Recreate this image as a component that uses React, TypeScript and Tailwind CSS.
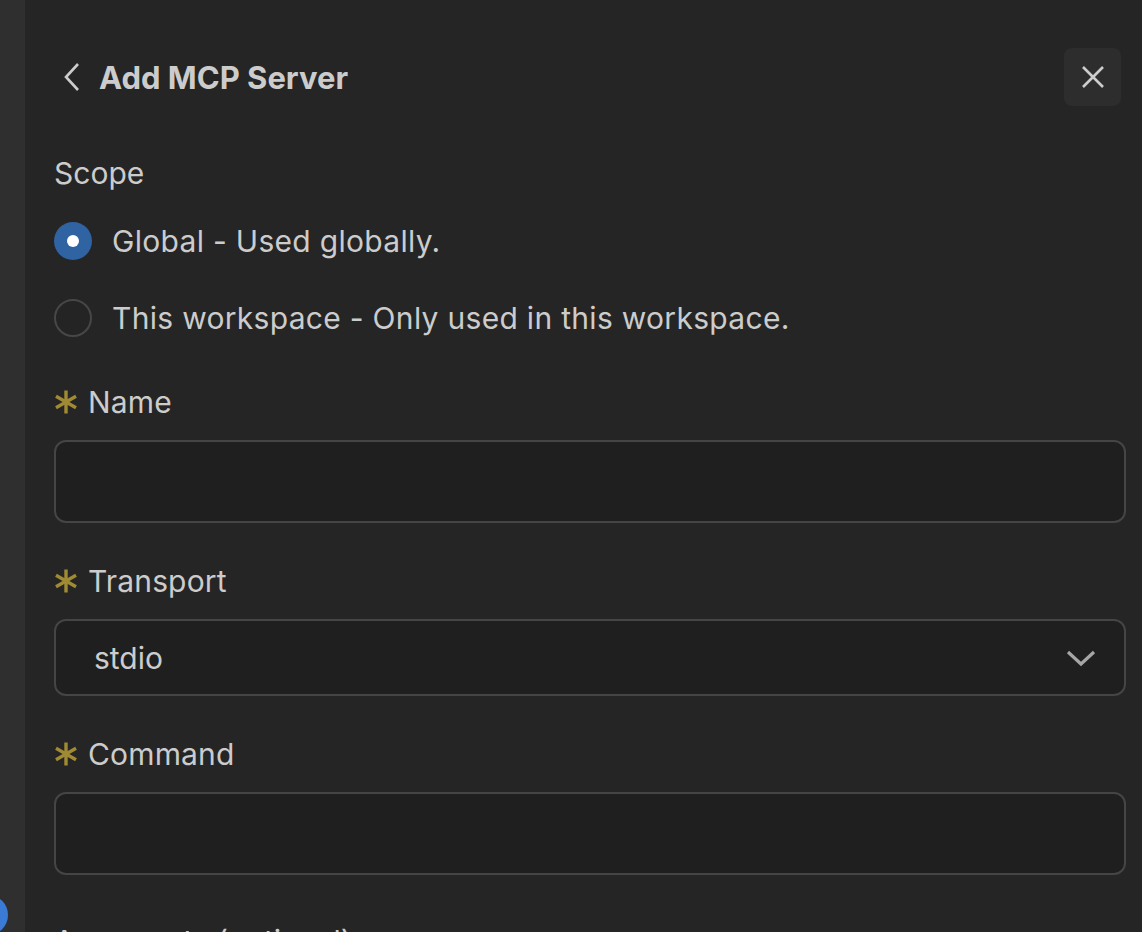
import React from 'react';

// Gold "required" asterisk (codicon style, six spokes)
function Required() {
  return (
    <svg width="24" height="24" viewBox="0 0 24 24" className="shrink-0">
      <g stroke="#a08a34" strokeWidth="3.4" strokeLinecap="butt">
        <line x1="12" y1="0.5" x2="12" y2="23.5" />
        <line x1="2" y1="6.2" x2="22" y2="17.8" />
        <line x1="2" y1="17.8" x2="22" y2="6.2" />
      </g>
    </svg>
  );
}

function FieldLabel({ text, className = '' }: { text: string; className?: string }) {
  return (
    <div className={`flex h-[40px] shrink-0 items-center gap-[10px] ${className}`}>
      <Required />
      <span className="text-[30px] leading-none tracking-[0.005em] text-[#cccccc]">{text}</span>
    </div>
  );
}

function Radio({ checked, label }: { checked: boolean; label: string }) {
  return (
    <div className="flex h-[77px] shrink-0 items-center gap-[20px]">
      {checked ? (
        <span className="flex h-[38px] w-[38px] items-center justify-center rounded-full bg-[#2f63a2]">
          <span className="h-[12px] w-[12px] rounded-full bg-white" />
        </span>
      ) : (
        <span className="h-[38px] w-[38px] rounded-full border-2 border-[#474747] bg-[#242424]" />
      )}
      <span className="text-[30px] leading-none tracking-[0.01em] text-[#cccccc]">{label}</span>
    </div>
  );
}

export default function App() {
  return (
    <div
      className="flex h-[932px] w-[1142px] overflow-hidden bg-[#252525]"
      style={{ fontFamily: 'Inter, "Noto Sans", sans-serif' }}
    >
      {/* activity strip */}
      <div className="relative w-[25px] shrink-0 bg-[#2f2f2f]">
        <span className="absolute left-[-32px] top-[895px] h-[40px] w-[40px] rounded-full bg-[#3a7bd5]" />
      </div>

      <div className="flex flex-1 flex-col pl-[29px] pr-[16px]">
        {/* clipped section header above */}
        <div className="-mt-[21px] h-[26px] shrink-0 pl-[22px] text-[22px] font-bold leading-[26px] tracking-wide text-[#bbbbbb]">
          CHAT
        </div>

        {/* header */}
        <div className="mt-[43px] flex h-[58px] shrink-0 items-center justify-between">
          <div className="flex items-center">
            <svg width="30" height="30" viewBox="0 0 30 30" className="ml-[4px]">
              <path d="M20 2 L8 15 L20 28" fill="none" stroke="#cccccc" strokeWidth="2.6" />
            </svg>
            <span className="ml-[11px] text-[31px] font-bold leading-none text-[#cccccc]">Add MCP Server</span>
          </div>
          <button className="mr-[5px] flex h-[58px] w-[57px] items-center justify-center rounded-[8px] bg-[#2d2d2d]">
            <svg width="24" height="24" viewBox="0 0 24 24">
              <path d="M2 2 L22 22 M22 2 L2 22" stroke="#cccccc" strokeWidth="2.6" />
            </svg>
          </button>
        </div>

        {/* scope */}
        <div className="mt-[47px] flex h-[40px] shrink-0 items-center text-[30px] leading-none text-[#cccccc]">Scope</div>
        <div className="mt-[9px] flex shrink-0 flex-col">
          <Radio checked label="Global - Used globally." />
          <Radio checked={false} label="This workspace - Only used in this workspace." />
        </div>

        {/* name */}
        <FieldLabel text="Name" className="mt-[26px]" />
        <div className="mt-[18px] h-[83px] shrink-0 rounded-[12px] border-2 border-[#454545] bg-[#1f1f1f]" />

        {/* transport */}
        <FieldLabel text="Transport" className="mt-[38px]" />
        <div className="mt-[18px] flex h-[77px] shrink-0 items-center justify-between rounded-[12px] border-2 border-[#454545] bg-[#1f1f1f] pl-[38px] pr-[28px]">
          <span className="text-[30px] leading-none text-[#cccccc]">stdio</span>
          <svg width="30" height="18" viewBox="0 0 30 18">
            <path d="M2 3 L15 15 L28 3" fill="none" stroke="#a6a6a6" strokeWidth="3.2" />
          </svg>
        </div>

        {/* command */}
        <FieldLabel text="Command" className="mt-[38px]" />
        <div className="mt-[18px] h-[83px] shrink-0 rounded-[12px] border-2 border-[#454545] bg-[#1f1f1f]" />

        {/* arguments (clipped at bottom) */}
        <div className="mt-[46px] flex h-[40px] shrink-0 items-center text-[30px] leading-none text-[#cccccc]">
          Arguments (optional)
        </div>
      </div>
    </div>
  );
}
